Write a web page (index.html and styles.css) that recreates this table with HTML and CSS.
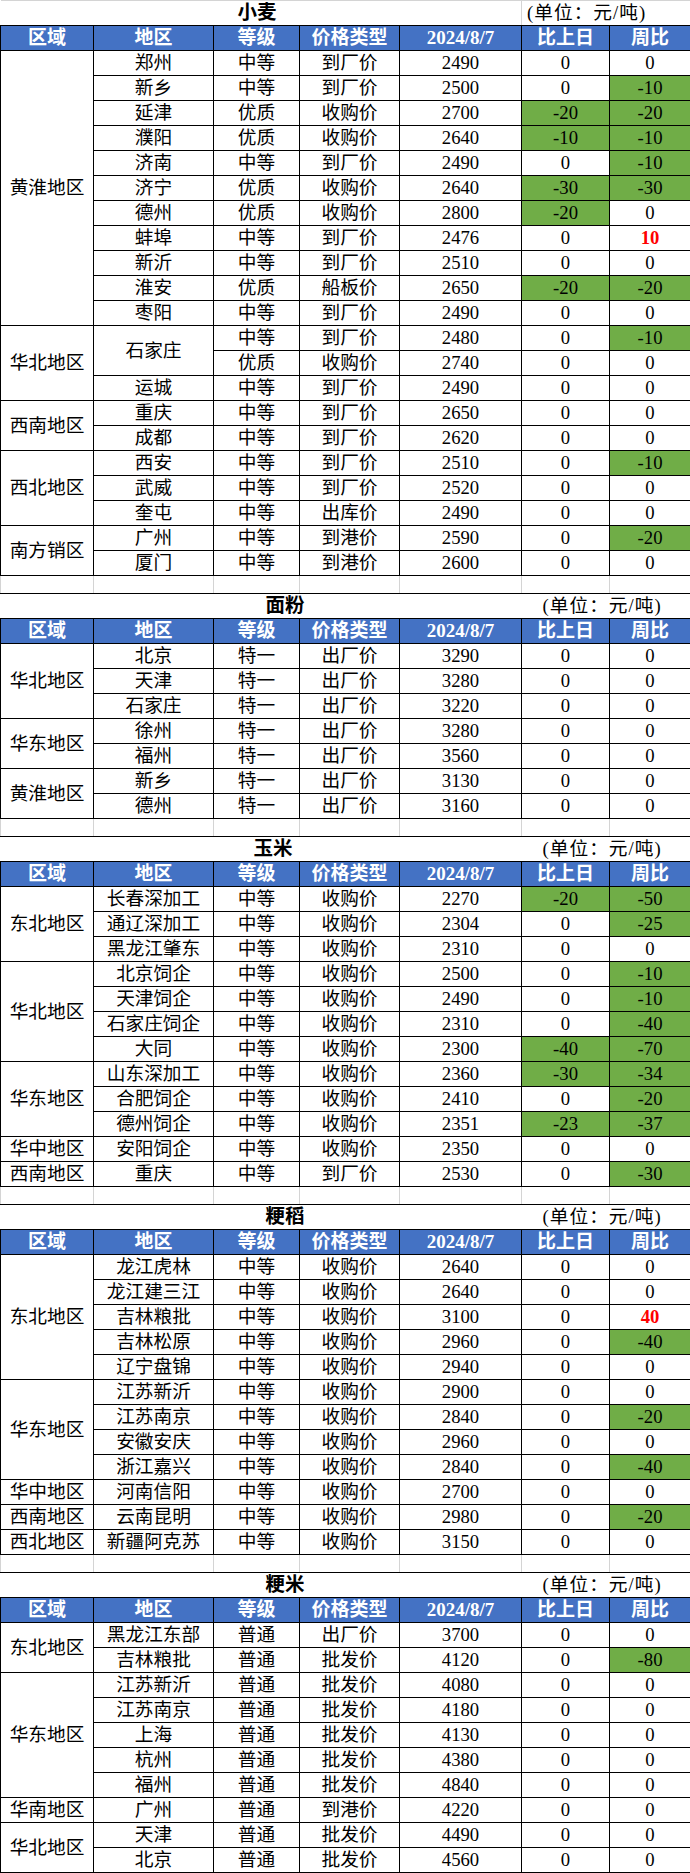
FILE: index.html
```html
<!DOCTYPE html>
<html lang="zh-CN">
<head>
<meta charset="utf-8">
<title>粮食价格</title>
<link rel="stylesheet" href="styles.css">
</head>
<body>
<table class="sheet">
<colgroup>
<col class="c1"><col class="c2"><col class="c3"><col class="c4"><col class="c5"><col class="c6"><col class="c7">
</colgroup>
<tbody>
<tr class="title first"><td colspan="5" class="tname t1">小麦</td><td colspan="2" class="unit u1">(单位：元/吨)</td></tr>
<tr class="head"><th>区域</th><th>地区</th><th>等级</th><th>价格类型</th><th>2024/8/7</th><th>比上日</th><th>周比</th></tr>
<tr><td rowspan="11">黄淮地区</td><td>郑州</td><td>中等</td><td>到厂价</td><td>2490</td><td>0</td><td>0</td></tr>
<tr><td>新乡</td><td>中等</td><td>到厂价</td><td>2500</td><td>0</td><td class="g">-10</td></tr>
<tr><td>延津</td><td>优质</td><td>收购价</td><td>2700</td><td class="g">-20</td><td class="g">-20</td></tr>
<tr><td>濮阳</td><td>优质</td><td>收购价</td><td>2640</td><td class="g">-10</td><td class="g">-10</td></tr>
<tr><td>济南</td><td>中等</td><td>到厂价</td><td>2490</td><td>0</td><td class="g">-10</td></tr>
<tr><td>济宁</td><td>优质</td><td>收购价</td><td>2640</td><td class="g">-30</td><td class="g">-30</td></tr>
<tr><td>德州</td><td>优质</td><td>收购价</td><td>2800</td><td class="g">-20</td><td>0</td></tr>
<tr><td>蚌埠</td><td>中等</td><td>到厂价</td><td>2476</td><td>0</td><td class="r">10</td></tr>
<tr><td>新沂</td><td>中等</td><td>到厂价</td><td>2510</td><td>0</td><td>0</td></tr>
<tr><td>淮安</td><td>优质</td><td>船板价</td><td>2650</td><td class="g">-20</td><td class="g">-20</td></tr>
<tr><td>枣阳</td><td>中等</td><td>到厂价</td><td>2490</td><td>0</td><td>0</td></tr>
<tr><td rowspan="3">华北地区</td><td rowspan="2">石家庄</td><td>中等</td><td>到厂价</td><td>2480</td><td>0</td><td class="g">-10</td></tr>
<tr><td>优质</td><td>收购价</td><td>2740</td><td>0</td><td>0</td></tr>
<tr><td>运城</td><td>中等</td><td>到厂价</td><td>2490</td><td>0</td><td>0</td></tr>
<tr><td rowspan="2">西南地区</td><td>重庆</td><td>中等</td><td>到厂价</td><td>2650</td><td>0</td><td>0</td></tr>
<tr><td>成都</td><td>中等</td><td>到厂价</td><td>2620</td><td>0</td><td>0</td></tr>
<tr><td rowspan="3">西北地区</td><td>西安</td><td>中等</td><td>到厂价</td><td>2510</td><td>0</td><td class="g">-10</td></tr>
<tr><td>武威</td><td>中等</td><td>到厂价</td><td>2520</td><td>0</td><td>0</td></tr>
<tr><td>奎屯</td><td>中等</td><td>出库价</td><td>2490</td><td>0</td><td>0</td></tr>
<tr><td rowspan="2">南方销区</td><td>广州</td><td>中等</td><td>到港价</td><td>2590</td><td>0</td><td class="g">-20</td></tr>
<tr><td>厦门</td><td>中等</td><td>到港价</td><td>2600</td><td>0</td><td>0</td></tr>
<tr class="gap"><td></td><td></td><td></td><td></td><td></td><td></td><td></td></tr>

<tr class="title"><td colspan="5" class="tname t2">面粉</td><td colspan="2" class="unit u2">(单位：元/吨)</td></tr>
<tr class="head"><th>区域</th><th>地区</th><th>等级</th><th>价格类型</th><th>2024/8/7</th><th>比上日</th><th>周比</th></tr>
<tr><td rowspan="3">华北地区</td><td>北京</td><td>特一</td><td>出厂价</td><td>3290</td><td>0</td><td>0</td></tr>
<tr><td>天津</td><td>特一</td><td>出厂价</td><td>3280</td><td>0</td><td>0</td></tr>
<tr><td>石家庄</td><td>特一</td><td>出厂价</td><td>3220</td><td>0</td><td>0</td></tr>
<tr><td rowspan="2">华东地区</td><td>徐州</td><td>特一</td><td>出厂价</td><td>3280</td><td>0</td><td>0</td></tr>
<tr><td>福州</td><td>特一</td><td>出厂价</td><td>3560</td><td>0</td><td>0</td></tr>
<tr><td rowspan="2">黄淮地区</td><td>新乡</td><td>特一</td><td>出厂价</td><td>3130</td><td>0</td><td>0</td></tr>
<tr><td>德州</td><td>特一</td><td>出厂价</td><td>3160</td><td>0</td><td>0</td></tr>
<tr class="gap"><td></td><td></td><td></td><td></td><td></td><td></td><td></td></tr>

<tr class="title"><td colspan="5" class="tname t3">玉米</td><td colspan="2" class="unit u2">(单位：元/吨)</td></tr>
<tr class="head"><th>区域</th><th>地区</th><th>等级</th><th>价格类型</th><th>2024/8/7</th><th>比上日</th><th>周比</th></tr>
<tr><td rowspan="3">东北地区</td><td>长春深加工</td><td>中等</td><td>收购价</td><td>2270</td><td class="g">-20</td><td class="g">-50</td></tr>
<tr><td>通辽深加工</td><td>中等</td><td>收购价</td><td>2304</td><td>0</td><td class="g">-25</td></tr>
<tr><td>黑龙江肇东</td><td>中等</td><td>收购价</td><td>2310</td><td>0</td><td>0</td></tr>
<tr><td rowspan="4">华北地区</td><td>北京饲企</td><td>中等</td><td>收购价</td><td>2500</td><td>0</td><td class="g">-10</td></tr>
<tr><td>天津饲企</td><td>中等</td><td>收购价</td><td>2490</td><td>0</td><td class="g">-10</td></tr>
<tr><td>石家庄饲企</td><td>中等</td><td>收购价</td><td>2310</td><td>0</td><td class="g">-40</td></tr>
<tr><td>大同</td><td>中等</td><td>收购价</td><td>2300</td><td class="g">-40</td><td class="g">-70</td></tr>
<tr><td rowspan="3">华东地区</td><td>山东深加工</td><td>中等</td><td>收购价</td><td>2360</td><td class="g">-30</td><td class="g">-34</td></tr>
<tr><td>合肥饲企</td><td>中等</td><td>收购价</td><td>2410</td><td>0</td><td class="g">-20</td></tr>
<tr><td>德州饲企</td><td>中等</td><td>收购价</td><td>2351</td><td class="g">-23</td><td class="g">-37</td></tr>
<tr><td>华中地区</td><td>安阳饲企</td><td>中等</td><td>收购价</td><td>2350</td><td>0</td><td>0</td></tr>
<tr><td>西南地区</td><td>重庆</td><td>中等</td><td>到厂价</td><td>2530</td><td>0</td><td class="g">-30</td></tr>
<tr class="gap"><td></td><td></td><td></td><td></td><td></td><td></td><td></td></tr>

<tr class="title"><td colspan="5" class="tname t4">粳稻</td><td colspan="2" class="unit u2">(单位：元/吨)</td></tr>
<tr class="head"><th>区域</th><th>地区</th><th>等级</th><th>价格类型</th><th>2024/8/7</th><th>比上日</th><th>周比</th></tr>
<tr><td rowspan="5">东北地区</td><td>龙江虎林</td><td>中等</td><td>收购价</td><td>2640</td><td>0</td><td>0</td></tr>
<tr><td>龙江建三江</td><td>中等</td><td>收购价</td><td>2640</td><td>0</td><td>0</td></tr>
<tr><td>吉林粮批</td><td>中等</td><td>收购价</td><td>3100</td><td>0</td><td class="r">40</td></tr>
<tr><td>吉林松原</td><td>中等</td><td>收购价</td><td>2960</td><td>0</td><td class="g">-40</td></tr>
<tr><td>辽宁盘锦</td><td>中等</td><td>收购价</td><td>2940</td><td>0</td><td>0</td></tr>
<tr><td rowspan="4">华东地区</td><td>江苏新沂</td><td>中等</td><td>收购价</td><td>2900</td><td>0</td><td>0</td></tr>
<tr><td>江苏南京</td><td>中等</td><td>收购价</td><td>2840</td><td>0</td><td class="g">-20</td></tr>
<tr><td>安徽安庆</td><td>中等</td><td>收购价</td><td>2960</td><td>0</td><td>0</td></tr>
<tr><td>浙江嘉兴</td><td>中等</td><td>收购价</td><td>2840</td><td>0</td><td class="g">-40</td></tr>
<tr><td>华中地区</td><td>河南信阳</td><td>中等</td><td>收购价</td><td>2700</td><td>0</td><td>0</td></tr>
<tr><td>西南地区</td><td>云南昆明</td><td>中等</td><td>收购价</td><td>2980</td><td>0</td><td class="g">-20</td></tr>
<tr><td>西北地区</td><td>新疆阿克苏</td><td>中等</td><td>收购价</td><td>3150</td><td>0</td><td>0</td></tr>
<tr class="gap"><td></td><td></td><td></td><td></td><td></td><td></td><td></td></tr>

<tr class="title"><td colspan="5" class="tname t5">粳米</td><td colspan="2" class="unit u2">(单位：元/吨)</td></tr>
<tr class="head"><th>区域</th><th>地区</th><th>等级</th><th>价格类型</th><th>2024/8/7</th><th>比上日</th><th>周比</th></tr>
<tr><td rowspan="2">东北地区</td><td>黑龙江东部</td><td>普通</td><td>出厂价</td><td>3700</td><td>0</td><td>0</td></tr>
<tr><td>吉林粮批</td><td>普通</td><td>批发价</td><td>4120</td><td>0</td><td class="g">-80</td></tr>
<tr><td rowspan="5">华东地区</td><td>江苏新沂</td><td>普通</td><td>批发价</td><td>4080</td><td>0</td><td>0</td></tr>
<tr><td>江苏南京</td><td>普通</td><td>批发价</td><td>4180</td><td>0</td><td>0</td></tr>
<tr><td>上海</td><td>普通</td><td>批发价</td><td>4130</td><td>0</td><td>0</td></tr>
<tr><td>杭州</td><td>普通</td><td>批发价</td><td>4380</td><td>0</td><td>0</td></tr>
<tr><td>福州</td><td>普通</td><td>批发价</td><td>4840</td><td>0</td><td>0</td></tr>
<tr><td>华南地区</td><td>广州</td><td>普通</td><td>到港价</td><td>4220</td><td>0</td><td>0</td></tr>
<tr><td rowspan="2">华北地区</td><td>天津</td><td>普通</td><td>批发价</td><td>4490</td><td>0</td><td>0</td></tr>
<tr><td>北京</td><td>普通</td><td>批发价</td><td>4560</td><td>0</td><td>0</td></tr>
</tbody>
</table>
</body>
</html>
```

FILE: styles.css
```css
html, body {
  margin: 0;
  padding: 0;
  background: #ffffff;
}

.sheet {
  border-collapse: collapse;
  table-layout: fixed;
  width: 690px;
  font-family: "Liberation Serif", "Noto Sans CJK SC", serif;
  font-size: 18.7px;
  color: #000000;
}

.c1 { width: 93px; }
.c2 { width: 120px; }
.c3 { width: 86px; }
.c4 { width: 100px; }
.c5 { width: 122px; }
.c6 { width: 88px; }
.c7 { width: 81px; }

.sheet tr {
  height: 25px;
}

.sheet td,
.sheet th {
  padding: 0;
  line-height: 22px;
  text-align: center;
  vertical-align: middle;
  border: 1px solid #000000;
  white-space: nowrap;
  overflow: hidden;
}

.sheet .head th {
  background: #4472c4;
  color: #ffffff;
  font-weight: bold;
  font-size: 19px;
}

.sheet td.g {
  background: #70ad47;
}

.sheet td.r {
  color: #ff0000;
  font-weight: bold;
}

.sheet .gap {
  height: 18px;
}

.sheet .gap td {
  border-left: 1px solid #d4d4d4;
  border-right: 1px solid #d4d4d4;
}

.sheet .title td {
  border-left: none;
  border-right: none;
  border-top: 1px solid #000000;
}

.sheet .title.first td {
  border-top: 1px solid #d4d4d4;
}

.sheet .title.first td.unit {
  border-left: 1px solid #d4d4d4;
}

.sheet .title td.tname {
  text-align: left;
  font-weight: bold;
  font-size: 19.5px;
}

.sheet .title td.t1 { padding-left: 237px; }
.sheet .title td.t2 { padding-left: 265px; }
.sheet .title td.t3 { padding-left: 253px; }
.sheet .title td.t4 { padding-left: 265px; }
.sheet .title td.t5 { padding-left: 265px; }

.sheet .title td.unit {
  text-align: left;
  font-size: 18.7px;
  letter-spacing: 1px;
}

.sheet .title td.u1 { padding-left: 5px; }
.sheet .title td.u2 { padding-left: 21px; }
```
